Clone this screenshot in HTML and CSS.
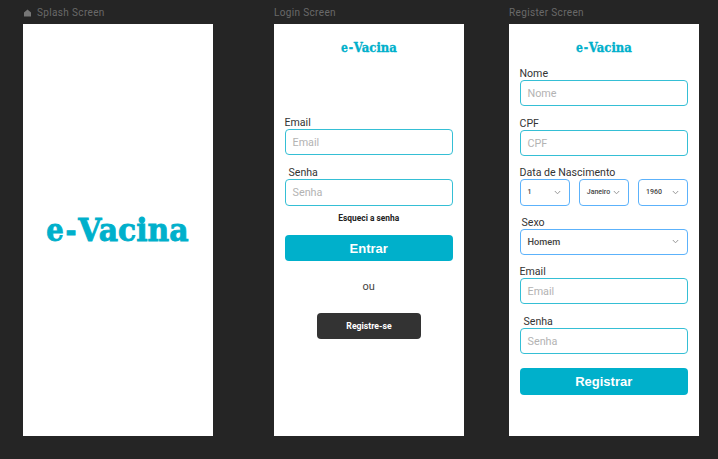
FILE: index.html
```html
<!DOCTYPE html>
<html lang="pt">
<head>
<meta charset="utf-8">
<title>e-Vacina</title>
<link rel="stylesheet" href="styles.css">
</head>
<body>
<main class="board">
  <section class="artboard">
    <h2 class="name"><svg class="home" viewBox="0 0 8 8"><path d="M4 0 8 3.4V8H0V3.4Z"/></svg><span class="t-splash">Splash Screen</span></h2>
    <div class="screen splash">
      <svg class="logo-big" viewBox="0 0 144 40"><text y="31"><tspan x="0.3" textLength="17.5" lengthAdjust="spacingAndGlyphs">e</tspan><tspan x="19.5" textLength="11" lengthAdjust="spacingAndGlyphs">-</tspan><tspan x="32.3" textLength="110.2" lengthAdjust="spacingAndGlyphs">Vacina</tspan></text></svg>
    </div>
  </section>
  <section class="artboard">
    <h2 class="name">Login Screen</h2>
    <div class="screen">
      <svg class="logo" viewBox="0 0 144 40"><text y="31"><tspan x="0.3" textLength="17.5" lengthAdjust="spacingAndGlyphs">e</tspan><tspan x="19.5" textLength="11" lengthAdjust="spacingAndGlyphs">-</tspan><tspan x="32.3" textLength="108.7" lengthAdjust="spacingAndGlyphs">Vacina</tspan></text></svg>
      <div class="field login-email"><span class="label">Email</span><div class="input">Email</div></div>
      <div class="field login-senha"><span class="label in4">Senha</span><div class="input">Senha</div></div>
      <div class="forgot"><span>Esqueci a senha</span></div>
      <div class="button">Entrar</div>
      <div class="or">ou</div>
      <div class="button dark">Registre-se</div>
    </div>
  </section>
  <section class="artboard">
    <h2 class="name">Register Screen</h2>
    <div class="screen register">
      <svg class="logo" viewBox="0 0 144 40"><text y="31"><tspan x="0.3" textLength="17.5" lengthAdjust="spacingAndGlyphs">e</tspan><tspan x="19.5" textLength="11" lengthAdjust="spacingAndGlyphs">-</tspan><tspan x="32.3" textLength="108.7" lengthAdjust="spacingAndGlyphs">Vacina</tspan></text></svg>
      <div class="field r-nome"><span class="label">Nome</span><div class="input">Nome</div></div>
      <div class="field r-cpf"><span class="label">CPF</span><div class="input">CPF</div></div>
      <div class="field r-data"><span class="label wide">Data de Nascimento</span>
        <div class="selects">
          <div class="input select small">1<svg class="chev" viewBox="0 0 7 5"><path d="M.8 1 3.5 3.8 6.2 1"/></svg></div>
          <div class="input select small">Janeiro<svg class="chev" viewBox="0 0 7 5"><path d="M.8 1 3.5 3.8 6.2 1"/></svg></div>
          <div class="input select small">1960<svg class="chev" viewBox="0 0 7 5"><path d="M.8 1 3.5 3.8 6.2 1"/></svg></div>
        </div>
      </div>
      <div class="field r-sexo"><span class="label in2">Sexo</span><div class="input select">Homem<svg class="chev" viewBox="0 0 7 5"><path d="M.8 1 3.5 3.8 6.2 1"/></svg></div></div>
      <div class="field r-email"><span class="label">Email</span><div class="input">Email</div></div>
      <div class="field r-senha"><span class="label in4">Senha</span><div class="input">Senha</div></div>
      <div class="button submit">Registrar</div>
    </div>
  </section>
</main>
</body>
</html>
```
FILE: styles.css
```css
* { box-sizing: border-box; }
body {
  margin: 0;
  width: 718px;
  height: 459px;
  overflow: hidden;
  background: #252525;
  font-family: Roboto, "Liberation Sans", sans-serif;
}
.board {
  display: grid;
  grid-template-columns: 190px 190px 190px;
  column-gap: 61px;
  padding: 6px 0 0 23px;
}
.artboard:nth-child(3) { margin-left: -16px; margin-right: 16px; }
.name {
  display: flex;
  align-items: center;
  gap: 6px;
  margin: 0;
  height: 13px;
  margin-bottom: 5.4px;
  font-size: 10px;
  line-height: 13px;
  font-weight: 400;
  letter-spacing: .35px;
  color: #696969;
  white-space: nowrap;
}
.home { width: 7px; height: 8px; margin-left: 1px; fill: #777; }
.screen {
  display: flex;
  flex-direction: column;
  width: 190px;
  height: 412px;
  padding: 16.1px 11px 0 10.5px;
  background: #fff;
}
.splash { align-items: center; padding: 186px 0 0; }
.logo-big, .logo { overflow: visible; fill: #00b0cb; stroke: #00b0cb; font-family: "DejaVu Serif", serif; font-size: 32.5px; font-weight: 700; stroke-width: .9; }
.logo-big { width: 144px; height: 40px; }
.logo { width: 57px; height: 16px; margin-left: 56px; flex: none; }
.field { display: flex; flex-direction: column; }
.label {
  height: 14px;
  padding-top: 1px;
  font-size: 10.6px;
  line-height: 14px;
  color: #333;
  white-space: nowrap;
}
.wide { letter-spacing: 0; }
.in2 { padding-left: 2px; }
.in4 { padding-left: 4px; }
.input {
  height: 26.5px;
  padding: 0 7px;
  border: 1.4px solid #35bfd5;
  border-radius: 4px;
  font-size: 10.8px;
  line-height: 25px;
  color: #b3b3b3;
}
.select {
  display: flex;
  align-items: center;
  justify-content: space-between;
  padding-right: 8px;
  border-color: #5cb2fb;
  color: #444;
  font-size: 9.2px;
  font-weight: 500;
}
.selects { display: grid; grid-template-columns: repeat(3, 50px); justify-content: space-between; }
.small { font-size: 7px; }
.chev { width: 7px; height: 5px; fill: none; stroke: #999; stroke-width: 1; }
.button {
  height: 26.5px;
  border-radius: 4px;
  background: #00b0cb;
  color: #fff;
  text-align: center;
  font: 700 13px/27.5px "Liberation Sans", sans-serif;
}
.login-email { margin-top: 58.5px; }
.login-senha { margin-top: 9.8px; }
.forgot { height: 12px; margin: 6.5px 0 10.5px; text-align: center; font-size: 8.4px; line-height: 12px; font-weight: 700; color: #222; }
.or { height: 14px; margin: 19px 0 18.5px; text-align: center; font-size: 11px; line-height: 14px; color: #444; }
.dark {
  width: 104px;
  margin-left: 32.5px;
  background: #333;
  font: 700 8.7px/26.5px Roboto, sans-serif;
}
.r-nome { margin-top: 9.5px; }
.r-cpf { margin-top: 9.3px; }
.r-data { margin-top: 8.8px; }
.r-sexo { margin-top: 9px; }
.r-email { margin-top: 8.8px; }
.r-senha { margin-top: 9.4px; }
.submit { margin-top: 14.2px; }
```
